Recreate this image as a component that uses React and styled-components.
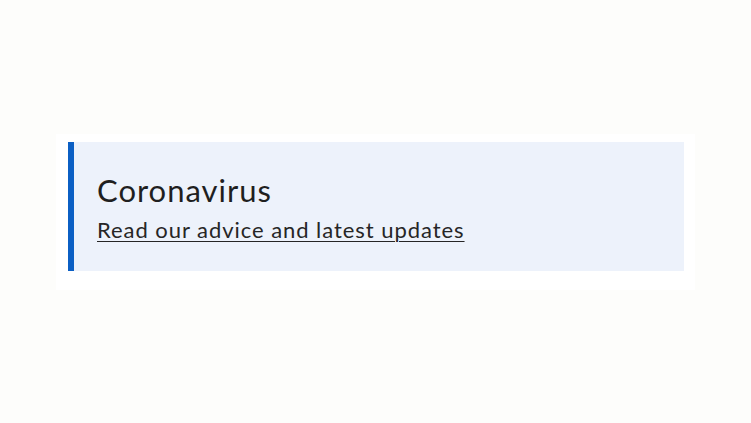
import styled, { createGlobalStyle } from "styled-components"

const Global = createGlobalStyle`
  body {
    margin: 0;
    background: #fdfdfb;
    font-family: "Lato", "Noto Sans", sans-serif;
  }
`

const Page = styled.div`
  padding: 134px 0 0 56px;
`

const Card = styled.div`
  width: 616px;
  background: #ffffff;
  padding: 8px 11px 19px 12px;
`

const Notice = styled.div`
  height: 129px;
  box-sizing: border-box;
  background: #edf2fb;
  border-left: 6px solid #0b5fc4;
  padding: 28px 0 0 23px;
`

const Title = styled.h2`
  margin: 0;
  font-size: 31px;
  font-weight: 400;
  line-height: 40px;
  letter-spacing: 1px;
  color: #1f1f1f;
`

const Link = styled.a`
  display: inline-block;
  margin-top: 5px;
  font-size: 22px;
  line-height: 30px;
  letter-spacing: 0.95px;
  color: #262626;
  text-decoration: underline;
  text-underline-offset: 3px;
  text-decoration-thickness: 1px;
`

export default function App() {
  return (
    <>
      <Global />
      <Page>
        <Card>
          <Notice>
            <Title>Coronavirus</Title>
            <Link href="#">Read our advice and latest updates</Link>
          </Notice>
        </Card>
      </Page>
    </>
  )
}
